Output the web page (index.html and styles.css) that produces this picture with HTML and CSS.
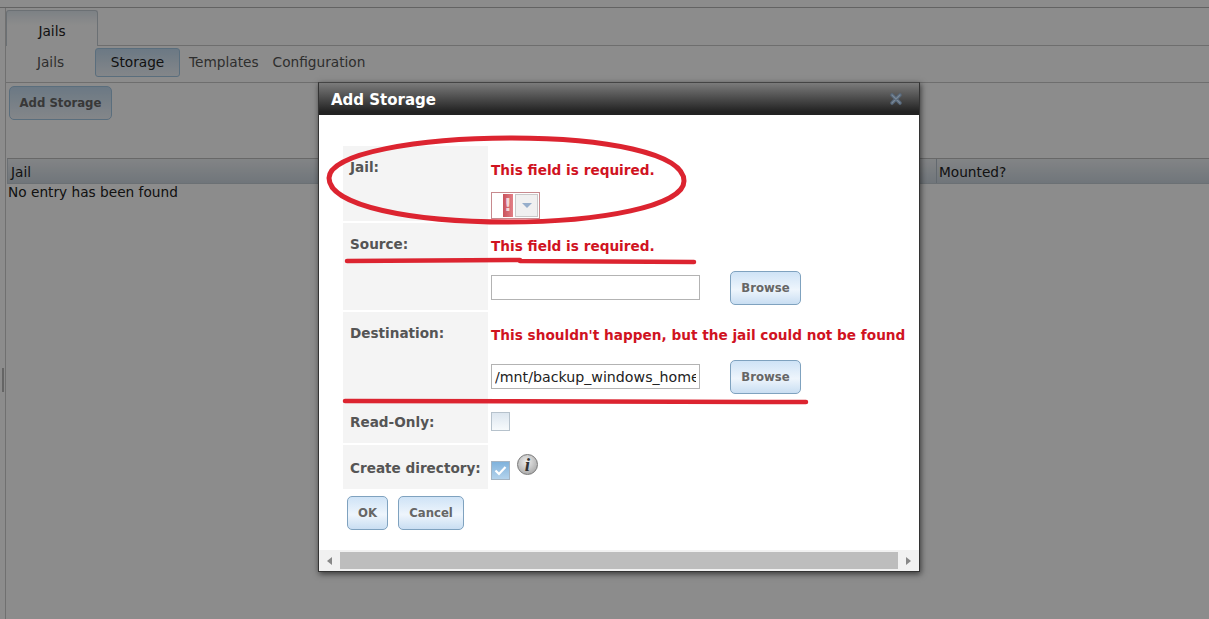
FILE: index.html

```html
<!DOCTYPE html>
<html lang="en">
<head>
  <meta charset="UTF-8" />
  <title>Jails - Add Storage</title>
  <link rel="stylesheet" href="styles.css">
</head>
<body>

<div class="page">
  <div class="top-strip"></div>
  <div class="tab-panel">
    <div class="tab-row">
      <div class="tab">Jails</div>
    </div>
    <div class="subtab-row">
      <div class="subtab subtab-first">Jails</div>
      <div class="subtab subtab-active">Storage</div>
      <div class="subtab">Templates</div>
      <div class="subtab">Configuration</div>
    </div>
    <div class="tab-body">
      <button class="btn add-btn">Add Storage</button>
      <div class="grid-head">
        <div class="grid-col grid-col-jail">Jail</div>
        <div class="grid-col grid-col-mounted">Mounted?</div>
      </div>
      <div class="grid-empty">No entry has been found</div>
    </div>
  </div>
</div>

<div class="splitter"></div>
<div class="backdrop"></div>

<div class="dialog">
  <div class="dialog-title">
    <span>Add Storage</span>
    <svg class="close-icon" width="14" height="14" viewBox="0 0 14 14">
      <path d="M3 3 L11 11 M11 3 L3 11" stroke="#56677a" stroke-width="3.6" stroke-linecap="round"/>
      <path d="M3 3 L11 11 M11 3 L3 11" stroke="#7a8896" stroke-width="1.2" stroke-linecap="round"/>
    </svg>
  </div>
  <div class="dialog-body">
    <div class="form-row row-jail">
      <div class="form-label">Jail:</div>
      <div class="form-field">
        <div class="error">This field is required.</div>
        <div class="select-bad">
          <div class="select-input"></div>
          <div class="select-warn">!</div>
          <div class="select-arrow"><i></i></div>
        </div>
      </div>
    </div>
    <div class="form-row row-path">
      <div class="form-label">Source:</div>
      <div class="form-field">
        <div class="error">This field is required.</div>
        <div class="path-line">
          <input class="text-input" type="text" value="">
          <button class="btn browse-btn">Browse</button>
        </div>
      </div>
    </div>
    <div class="form-row row-path">
      <div class="form-label">Destination:</div>
      <div class="form-field">
        <div class="error">This shouldn't happen, but the jail could not be found</div>
        <div class="path-line">
          <input class="text-input" type="text" value="/mnt/backup_windows_home">
          <button class="btn browse-btn">Browse</button>
        </div>
      </div>
    </div>
    <div class="form-row row-readonly">
      <div class="form-label">Read-Only:</div>
      <div class="form-field">
        <div class="check"></div>
      </div>
    </div>
    <div class="form-row row-create">
      <div class="form-label">Create directory:</div>
      <div class="form-field field-create">
        <div class="check check-on">
          <svg width="17" height="17" viewBox="0 0 17 17">
            <path d="M3.5 8.5 L7 12 L13.5 5" fill="none" stroke="#fff" stroke-width="2.2"/>
          </svg>
        </div>
        <div class="info-icon">i</div>
      </div>
    </div>
    <div class="form-actions">
      <button class="btn ok-btn">OK</button>
      <button class="btn cancel-btn">Cancel</button>
    </div>
  </div>
  <div class="hscroll">
    <div class="hscroll-arrow"><i class="arrow-left"></i></div>
    <div class="hscroll-thumb"></div>
    <div class="hscroll-arrow"><i class="arrow-right"></i></div>
  </div>
</div>

<!-- red marks somebody drew on the screenshot -->
<svg class="marks" width="1209" height="619" viewBox="0 0 1209 619">
  <path class="mark-ring" d="M512 138 C604 138 684 153 684 181 C684 206 600 222 508 222 C412 222 329 206 329 178 C329 153 420 138 512 138 Z" />
  <path d="M347 261 L520 260 M520 261 L694 262" />
  <path d="M345 401 L806 402" />
</svg>

</body>
</html>
```

FILE: styles.css

```css
* {
  box-sizing: border-box;
}

html, body {
  margin: 0;
  height: 100%;
  overflow: hidden;
}

body {
  font-family: "DejaVu Sans", sans-serif;
  font-size: 13.7px;
  background: #fff;
  color: #222;
}

.top-strip {
  height: 8px;
  border-bottom: 1px solid #b5b5b5;
}

.tab-panel {
  margin-left: 5px;
  height: 611px;
  border-left: 1px solid #cdcdcd;
}

.tab-row {
  height: 38px;
  padding-top: 2px;
  border-bottom: 1px solid #c9c9c9;
}

.tab {
  width: 92px;
  height: 36px;
  padding-top: 12px;
  text-align: center;
  background: linear-gradient(to bottom, #e3ebf2, #fff 40%);
  border: 1px solid #c4ccd4;
  border-bottom: none;
  border-radius: 3px 3px 0 0;
  position: relative;
  margin-bottom: -1px;
}

.subtab-row {
  display: flex;
  align-items: center;
  height: 37px;
  padding-bottom: 4px;
  border-bottom: 1px solid #c9c9c9;
  color: #555;
}

.subtab {
  padding: 0 7px;
}

.subtab-first {
  width: 89px;
  text-align: center;
}

.subtab-active {
  width: 85px;
  height: 29px;
  margin-right: 2px;
  line-height: 27px;
  text-align: center;
  color: #222;
  background: linear-gradient(to bottom, #c4dcf1, #f0f5fa);
  border: 1px solid #a5c8e4;
  border-radius: 3px;
}

.tab-body {
  padding: 3px 0 0 1px;
}

.btn {
  font-family: inherit;
  font-weight: bold;
  font-size: 11.7px;
  color: #666;
  border: 1px solid #7fa2bf;
  border-radius: 5px;
  background: linear-gradient(to bottom, #cfe3f6, #eef5fc 55%, #c9def2);
  padding: 0;
}

.add-btn {
  display: block;
  margin-left: 2px;
  width: 103px;
  height: 34px;
  border-color: #a5c8e4;
  background: linear-gradient(to bottom, #c4dcf1, #f0f5fa);
}

.grid-head {
  display: flex;
  justify-content: space-between;
  height: 26px;
  margin-top: 38px;
  line-height: 26px;
  background: linear-gradient(to bottom, #eef1f4, #ccd6df);
  border-top: 1px solid #bdbdbd;
  border-bottom: 1px solid #c4ccd4;
  border-left: 1px solid #c4ccd4;
}

.grid-col-jail {
  padding-left: 3px;
}

.grid-col-mounted {
  width: 273px;
  padding-left: 2px;
  border-left: 1px solid #b5c0ca;
}

.grid-empty {
  margin-left: 1px;
  line-height: 17px;
}

.splitter {
  position: absolute;
  left: 2px;
  top: 368px;
  width: 2px;
  height: 24px;
  background: #b8b8b8;
}

.backdrop {
  position: absolute;
  inset: 0;
  background: rgba(0, 0, 0, 0.45);
}

.dialog {
  position: absolute;
  left: 318px;
  top: 82px;
  width: 602px;
  height: 490px;
  display: flex;
  flex-direction: column;
  background: #fff;
  border: 1px solid #333;
  border-top-color: #444;
  box-shadow: 1px 2px 6px rgba(0, 0, 0, 0.6);
}

.dialog-title {
  display: flex;
  align-items: center;
  justify-content: space-between;
  height: 32px;
  padding: 1px 16px 0 12px;
  color: #fff;
  font-weight: bold;
  font-size: 15px;
  background: linear-gradient(to bottom, #7b7b7b, #222 90%);
  flex: none;
}

.close-icon {
  margin-top: -2px;
}

.dialog-body {
  flex: 1;
  padding: 31px 0 0 24px;
}

.form-row {
  display: flex;
  margin-bottom: 2px;
}

.row-jail {
  height: 75px;
}

.row-path {
  height: 87px;
}

.row-readonly {
  height: 42px;
}

.row-create {
  height: 44px;
}

.form-label {
  width: 145px;
  flex: none;
  padding: 13px 0 0 7px;
  font-weight: bold;
  font-size: 13.6px;
  color: #555;
  background: #f4f4f4;
}

.row-create .form-label {
  padding-top: 15px;
}

.form-field {
  padding-left: 3px;
}

.error {
  height: 46px;
  padding-top: 16px;
  font-weight: bold;
  font-size: 13.65px;
  color: #d0131f;
  white-space: nowrap;
}

.row-path .error {
  height: 48px;
  padding-top: 15px;
}

.select-bad {
  display: flex;
  width: 49px;
  height: 27px;
  padding: 1px;
  border: 1px solid #c78a8e;
  background: #fff;
}

.select-input {
  width: 10px;
}

.select-warn {
  width: 10px;
  text-align: center;
  line-height: 23px;
  font-size: 17px;
  font-weight: bold;
  color: #f3d5d7;
  background: linear-gradient(to right, #c9525b, #e27f86);
}

.select-arrow {
  flex: 1;
  margin-left: 2px;
  border: 1px solid #c9c9c9;
  background: #f0f0f0;
  display: flex;
  align-items: center;
  justify-content: center;
}

.select-arrow i {
  width: 0;
  height: 0;
  border-left: 5px solid transparent;
  border-right: 5px solid transparent;
  border-top: 5px solid #96aecb;
}

.path-line {
  display: flex;
  align-items: center;
  height: 34px;
}

.text-input {
  width: 209px;
  height: 25px;
  margin-top: -1px;
  padding: 0 3px;
  font-family: inherit;
  font-size: 14.2px;
  color: #222;
  border: 1px solid #b3b3b3;
  background: #fff;
  outline: none;
}

.browse-btn {
  width: 71px;
  height: 34px;
  margin-left: 30px;
}

.check {
  width: 19px;
  height: 19px;
  margin-top: 11px;
  border: 1px solid #b6c2cc;
  background: linear-gradient(to bottom, #dce6ef, #f7fafc);
}

.field-create {
  display: flex;
  align-items: flex-start;
}

.check-on {
  margin-top: 16px;
  border-color: #a5b4c2;
  background: linear-gradient(to bottom, #7fb2dc, #b4d3ec);
}

.check-on svg {
  display: block;
}

.info-icon {
  width: 21px;
  height: 21px;
  margin: 9px 0 0 7px;
  border-radius: 50%;
  border: 1px solid #777;
  background: radial-gradient(circle at 45% 35%, #eee, #999);
  font-family: "Liberation Serif", serif;
  font-style: italic;
  font-weight: bold;
  font-size: 19px;
  line-height: 19px;
  text-align: center;
  color: #333;
}

.form-actions {
  display: flex;
  gap: 10px;
  padding: 5px 0 0 4px;
}

.ok-btn {
  width: 41px;
  height: 34px;
}

.cancel-btn {
  width: 66px;
  height: 34px;
}

.hscroll {
  display: flex;
  align-items: center;
  height: 21px;
  background: #f1f1f1;
  flex: none;
}

.hscroll-arrow {
  width: 21px;
  height: 21px;
  display: flex;
  align-items: center;
  justify-content: center;
}

.hscroll-thumb {
  flex: 1;
  height: 17px;
  background: #bdbdbd;
}

.arrow-left, .arrow-right {
  width: 0;
  height: 0;
  border-top: 4px solid transparent;
  border-bottom: 4px solid transparent;
}

.arrow-left {
  border-right: 5px solid #888;
}

.arrow-right {
  border-left: 5px solid #888;
}

.marks {
  position: absolute;
  left: 0;
  top: 0;
  pointer-events: none;
}

.marks path {
  fill: none;
  stroke: #dc2430;
  stroke-width: 4.5;
  stroke-linecap: round;
}

.marks .mark-ring {
  stroke-width: 5;
}
```
